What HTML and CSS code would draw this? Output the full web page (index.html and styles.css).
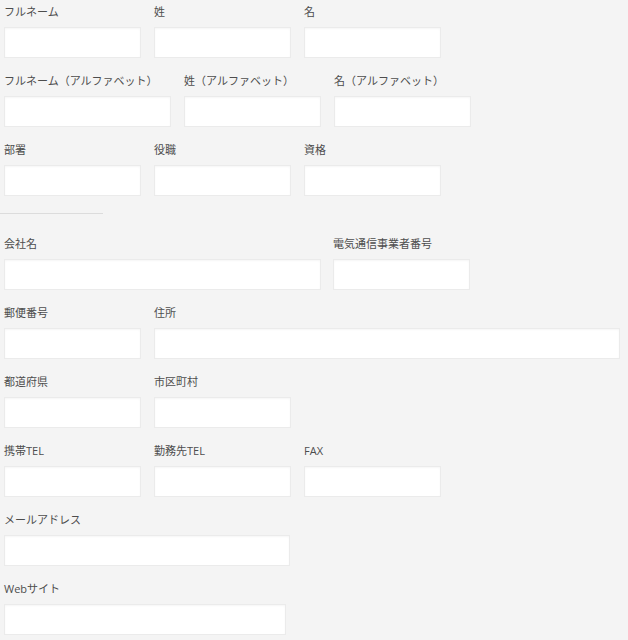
FILE: index.html
```html
<!DOCTYPE html>
<html lang="ja">
  <head>
    <meta charset="UTF-8" />
    <meta name="viewport" content="width=device-width, initial-scale=1.0" />
    <title>プロフィール編集</title>
    <link rel="stylesheet" href="styles.css">
  </head>
  <body>
    <form class="profile-form">
      <div class="form-row">
        <div class="field">
          <label for="fullName">フルネーム</label>
          <input type="text" id="fullName" />
        </div>
        <div class="field">
          <label for="lastName">姓</label>
          <input type="text" id="lastName" />
        </div>
        <div class="field">
          <label for="firstName">名</label>
          <input type="text" id="firstName" />
        </div>
      </div>

      <div class="form-row">
        <div class="field field--wide">
          <label for="fullNameEn">フルネーム（アルファベット）</label>
          <input type="text" id="fullNameEn" />
        </div>
        <div class="field">
          <label for="lastNameEn">姓（アルファベット）</label>
          <input type="text" id="lastNameEn" />
        </div>
        <div class="field">
          <label for="firstNameEn">名（アルファベット）</label>
          <input type="text" id="firstNameEn" />
        </div>
      </div>

      <div class="form-row">
        <div class="field">
          <label for="department">部署</label>
          <input type="text" id="department" />
        </div>
        <div class="field">
          <label for="position">役職</label>
          <input type="text" id="position" />
        </div>
        <div class="field">
          <label for="license">資格</label>
          <input type="text" id="license" />
        </div>
      </div>

      <hr class="divider" />

      <div class="form-row">
        <div class="field field--company">
          <label for="company">会社名</label>
          <input type="text" id="company" />
        </div>
        <div class="field">
          <label for="carrierNo">電気通信事業者番号</label>
          <input type="text" id="carrierNo" />
        </div>
      </div>

      <div class="form-row">
        <div class="field">
          <label for="zip">郵便番号</label>
          <input type="text" id="zip" />
        </div>
        <div class="field field--address">
          <label for="address">住所</label>
          <input type="text" id="address" />
        </div>
      </div>

      <div class="form-row">
        <div class="field">
          <label for="prefecture">都道府県</label>
          <input type="text" id="prefecture" />
        </div>
        <div class="field">
          <label for="city">市区町村</label>
          <input type="text" id="city" />
        </div>
      </div>

      <div class="form-row">
        <div class="field">
          <label for="mobile">携帯TEL</label>
          <input type="tel" id="mobile" />
        </div>
        <div class="field">
          <label for="officeTel">勤務先TEL</label>
          <input type="tel" id="officeTel" />
        </div>
        <div class="field">
          <label for="fax">FAX</label>
          <input type="tel" id="fax" />
        </div>
      </div>

      <div class="form-row">
        <div class="field field--mail">
          <label for="mail">メールアドレス</label>
          <input type="email" id="mail" />
        </div>
      </div>

      <div class="form-row">
        <div class="field field--web">
          <label for="website">Webサイト</label>
          <input type="url" id="website" />
        </div>
      </div>
    </form>
  </body>
</html>
```

FILE: styles.css
```css
* {
  margin: 0;
  padding: 0;
  box-sizing: border-box;
}

body {
  background: #f4f4f4;
  font-family: "Open Sans", "Noto Sans CJK JP", sans-serif;
  color: #4d4d4d;
}

.profile-form {
  padding: 0 4px;
}

.form-row {
  display: flex;
}

.field {
  display: flex;
  flex-direction: column;
  flex-shrink: 0;
  width: 137px;
  margin-right: 13px;
  margin-bottom: 11px;
}

.field:last-child {
  margin-right: 0;
}

.field--wide {
  width: 167px;
}

.field--company {
  width: 317px;
  margin-right: 12px;
}

.field--address {
  width: 466px;
}

.field--mail {
  width: 286px;
}

.field--web {
  width: 282px;
}

label {
  display: block;
  font-size: 11px;
  line-height: 24px;
  margin-bottom: 3px;
  white-space: nowrap;
  color: #4d4d4d;
}

input {
  width: 100%;
  height: 31px;
  padding: 0 8px;
  background: #fff;
  border: 1px solid #ebebeb;
  box-shadow: inset 0 1px 2px rgba(0, 0, 0, 0.04);
  font-size: 12px;
  font-family: inherit;
  color: #333;
}

input:focus {
  outline: none;
  border-color: #ccc;
}

.divider {
  width: 103px;
  margin: 6px 0 18px -4px;
  border: none;
  border-top: 1px solid #dcdcdc;
}
```
